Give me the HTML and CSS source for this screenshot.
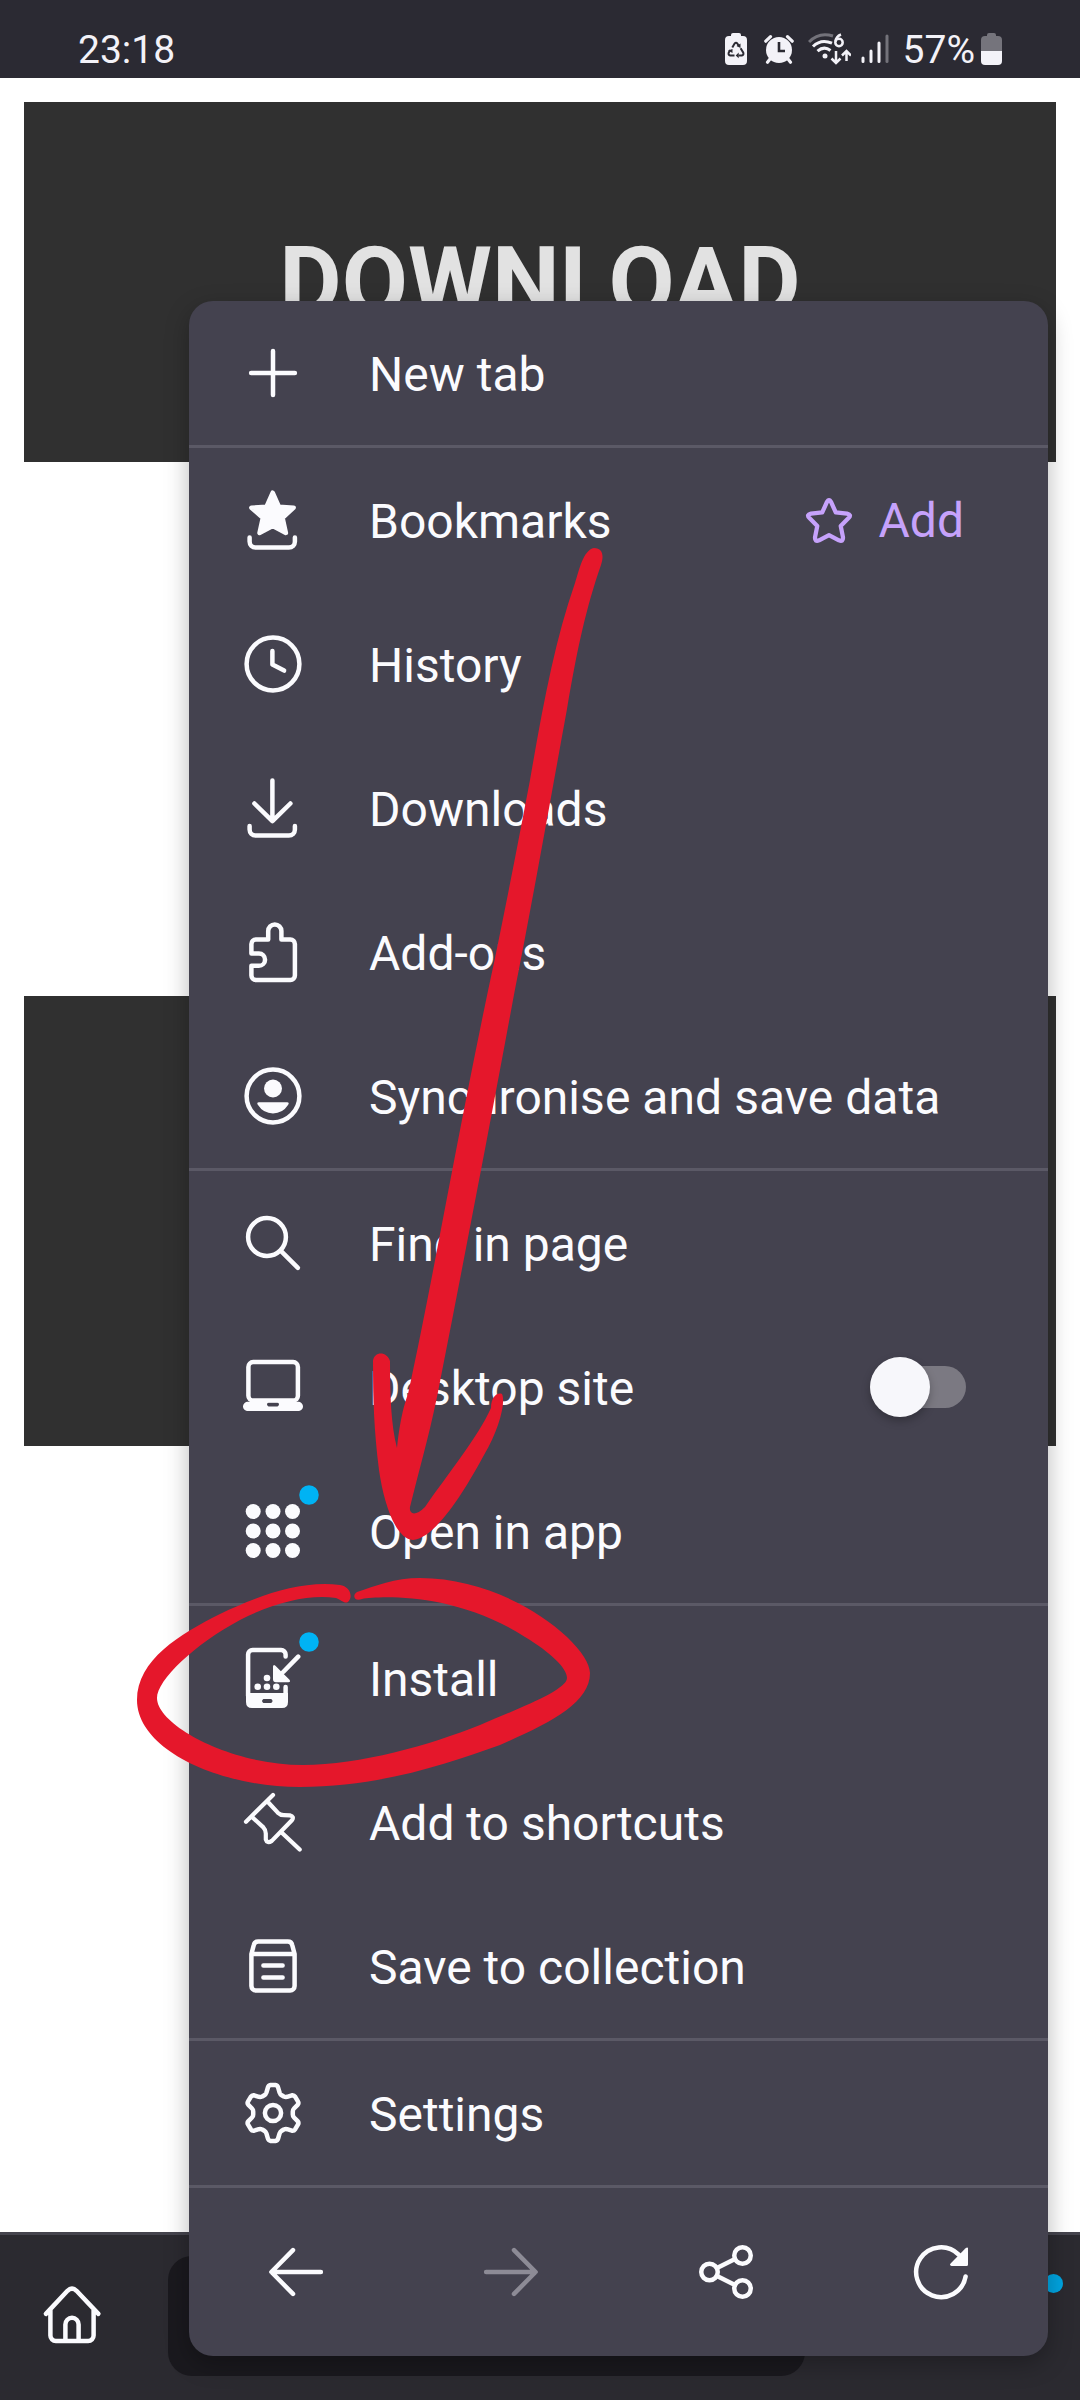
FILE: index.html
```html
<!DOCTYPE html>
<html lang="en">
<head>
<meta charset="utf-8">
<title>Browser menu</title>
<link rel="stylesheet" href="styles.css">
</head>
<body>
<div class="screen">
  <header class="status">
    <span class="clock">23:18</span>
    <div class="status-icons">
      <svg class="s-recycle" viewBox="0 0 22 32"><path fill="#f3f2f8" d="M6 3V2q0-2 2-2h6q2 0 2 2v1h2q4 0 4 4v21q0 4-4 4H4q-4 0-4-4V7q0-4 4-4z"/><g fill="none" stroke="#2b2a33" stroke-width="2"><path d="M7.3 14.6 9.6 10.600q1.400-1.700 2.800 0l1.300 2.300"/><path d="M15.600 15.200l2.700 4.500q.7 2.200-1.500 2.700h-3.300"/><path d="M9.500 22.400H5.200q-2.200-.5-1.500-2.700l1.500-2.600"/></g><path fill="#2b2a33" d="M15.500 10.500v4.500l-4-2zM13.700 19.500v5.800l-3-2.900zM3 17.500l4.500-1.500v4z"/></svg>
      <svg class="s-alarm" viewBox="0 0 30 30"><circle cx="15" cy="16" r="13" fill="#f3f2f8"/><path fill="none" stroke="#f3f2f8" stroke-width="3.200" stroke-linecap="round" d="M1.800 7.200 6.500 2.700M28.200 7.200 23.500 2.700M6 25 3.500 28.200M24 25l2.500 3.200"/><path d="M15 8v9h6" fill="none" stroke="#2b2a33" stroke-width="2.600"/></svg>
      <svg class="s-wifi" viewBox="0 0 43 32"><g fill="none" stroke-width="3"><path stroke="#73727a" d="M1 9Q11-1.500 25 3"/><path stroke="#f3f2f8" d="M5 13.500Q13 5.500 24 10.200M9.500 18.200Q16 12.500 22.500 17.500"/></g><circle cx="17" cy="23" r="2.500" fill="#f3f2f8"/><g fill="none" stroke="#f3f2f8" stroke-width="2.500"><circle cx="31" cy="9.500" r="3.700"/><path d="M27.500 8.500Q28 3.500 33 1.500M28 18v12M23.500 25.500l4.500 4.500 4.500-4.500M38.500 28V18M34 22.500l4.500-4.500 4.500 4.500"/></g></svg>
      <svg class="s-signal" viewBox="0 0 28 30"><g fill="none" stroke="#f3f2f8" stroke-width="3" stroke-linecap="round"><path d="M2 24v3.500M10 17v10.500M18 9v18.500"/><path stroke="#73727a" d="M26 2v25.500"/></g></svg>
      <span class="percent">57%</span>
      <svg class="s-battery" viewBox="0 0 21 32"><path fill="#75747c" d="M6 3V2q0-2 2-2h5q2 0 2 2v1h2q4 0 4 4v11H0V7q0-4 4-4z"/><path fill="#f3f2f8" d="M0 18h21v10q0 4-4 4H4q-4 0-4-4z"/></svg>
    </div>
  </header>
  <main class="page">
    <section class="card card-first"><h1>DOWNLOAD</h1></section>
    <section class="card card-second"></section>
  </main>
  <footer class="toolbar">
    <svg class="icon" viewBox="0 0 24 24"><path d="m3.300 11.300 7.200-7.700q1.500-1.500 3 0l7.300 7.700M4.800 10v8.500a1.800 1.800 0 0 0 1.800 1.800h10.800a1.800 1.800 0 0 0 1.800-1.800V10M9.800 20v-5.200a2.200 2.200 0 0 1 4.400 0V20"/></svg>
    <div class="url"></div>
    <i class="toolbar-dot"></i>
  </footer>

  <nav class="menu">
    <div class="group">
      <div class="row"><svg class="icon" viewBox="0 0 24 24"><path d="M12 4.700v14.600M4.700 12h14.600"/></svg><span>New tab</span></div>
    </div>
    <div class="group">
      <div class="row"><svg class="icon" viewBox="0 0 24 24"><path class="fill" d="m11.900 2.900 2.100 4.700 4.900.3-3.700 3.400 1.100 5-4.400-2.300-4.400 2.300 1.100-5-3.800-3.400 5-.3z"/><path d="M4.200 17.800v1.400a2 2 0 0 0 2 2h11.100a2 2 0 0 0 2-2v-1.400"/></svg><span>Bookmarks</span>
        <span class="add"><svg class="star" viewBox="0 0 24 24"><path d="m11 3.700q1-2 2 0l2 4.500 5 .5q2.200.5.700 2l-3.500 3.500 1 5q.2 2.200-1.800 1.400l-4.400-2.300-4.400 2.300q-2 .8-1.800-1.400l1-5-3.500-3.500q-1.500-1.500.7-2l5-.5z"/></svg>Add</span></div>
      <div class="row"><svg class="icon" viewBox="0 0 24 24"><circle cx="12" cy="12" r="8.800"/><path d="M11.800 7.700v4.500l3.900 2"/></svg><span>History</span></div>
      <div class="row"><svg class="icon" viewBox="0 0 24 24"><path d="M11.800 2.800v13.500M5.800 10.500l6 5.900 6-5.900M4.200 18v1.200a2 2 0 0 0 2 2h11.100a2 2 0 0 0 2-2V18"/></svg><span>Downloads</span></div>
      <div class="row"><svg class="icon" viewBox="0 0 24 24"><path d="M10.400 7.800V5a2.200 2.200 0 0 1 4.400 0v2.800h3a1.500 1.500 0 0 1 1.500 1.500v10.500a1.500 1.500 0 0 1-1.500 1.500H6.300a1.500 1.500 0 0 1-1.500-1.500v-3.200h2.500a2.050 2.050 0 0 0 0-4.100H4.800V9.300a1.500 1.500 0 0 1 1.500-1.500z"/></svg><span>Add-ons</span></div>
      <div class="row sync"><svg class="icon" viewBox="0 0 24 24"><circle cx="12" cy="12" r="8.800"/><circle class="solid" cx="12" cy="9.500" r="3"/><path class="solid" d="M7.300 14.100h9.400q.9.100.3.900-1.800 2.800-5 2.800t-5-2.800q-.6-.8.300-.9z"/></svg><span>Synchronise and save data</span></div>
    </div>
    <div class="group">
      <div class="row"><svg class="icon" viewBox="0 0 24 24"><circle cx="10" cy="10" r="6.300"/><path d="m14.700 14.700 5.600 5.600"/></svg><span>Find in page</span></div>
      <div class="row"><svg class="icon" viewBox="0 0 24 24"><rect x="3.800" y="3.700" width="16.500" height="12.800" rx="1.600"/><path class="solid" fill-rule="evenodd" d="M3.300 16.900h17.400q1.300.5 1.300 1.600t-1.300 1.500H3.300Q2 19.600 2 18.500t1.300-1.600zm7.200.2q-1 .7 0 1.400h3q1-.7 0-1.400z"/></svg><span>Desktop site</span><i class="switch"></i></div>
      <div class="row"><svg class="icon" viewBox="0 0 24 24"><g class="solid"><circle cx="5.400" cy="5.500" r="2.500"/><circle cx="12" cy="5.500" r="2.500"/><circle cx="18.500" cy="5.500" r="2.500"/><circle cx="5.400" cy="12" r="2.500"/><circle cx="12" cy="12" r="2.500"/><circle cx="18.500" cy="12" r="2.500"/><circle cx="5.400" cy="18.500" r="2.500"/><circle cx="12" cy="18.500" r="2.500"/><circle cx="18.500" cy="18.500" r="2.500"/></g><circle class="dot" cx="24" cy="0" r="3.250"/></svg><span>Open in app</span></div>
    </div>
    <div class="group">
      <div class="row"><svg class="icon" viewBox="0 0 24 24"><path d="M3.700 18V4.200a1.500 1.500 0 0 1 1.500-1.500h9.500a1.500 1.500 0 0 1 1.500 1.500v.6M16.200 15v3M20.400 4.900l-5 5.100"/><path class="solid" fill-rule="evenodd" d="M3 17h14v3q0 2-2 2H5q-2 0-2-2zm5.800 2q-.9.650 0 1.300h2.600q.9-.65 0-1.300zM12 8.200q.1-.9.800-.3l4.700 4.700q.5.800-.4.800H13q-1 0-1-1z"/><g class="solid"><circle cx="6.900" cy="14.900" r="1.100"/><circle cx="10" cy="14.900" r="1.100"/><circle cx="13.100" cy="14.900" r="1.100"/><circle cx="10" cy="12" r="1.100"/></g><circle class="dot" cx="24" cy="0" r="3.250"/></svg><span>Install</span></div>
      <div class="row"><svg class="icon pin" viewBox="0 0 24 24"><path d="m12 3-9 8.900M10 5l3.600 3.900q.8.800 2 .8l2 .1q1.600.4.700 1.600l-6.700 6.900q-1.600 1-2-.5v-2q0-1.200-.8-2L5 10.300M14.700 15.300l6.200 5.900"/></svg><span>Add to shortcuts</span></div>
      <div class="row"><svg class="icon" viewBox="0 0 24 24"><path d="M4.800 8v10.700a1.500 1.500 0 0 0 1.500 1.500h11.400a1.500 1.500 0 0 0 1.500-1.500V8l-.8-3a1.500 1.500 0 0 0-1.500-1.200H7.100A1.500 1.500 0 0 0 5.600 5zh14.400M8.800 11.800h6.400M8.800 15.800h6.400"/></svg><span>Save to collection</span></div>
    </div>
    <div class="group">
      <div class="row"><svg class="icon" viewBox="0 0 24 24"><circle cx="12" cy="12" r="2.700"/><path d="M11.200 2.700h1.600q.7.100.9.800l.5 1.700q.2.600.7.900l.7.400q.5.200 1.100.1l1.600-.5q.7-.1 1.100.5l.9 1.500q.4.700-.1 1.200l-1.200 1.200q-.4.400-.4 1v1q0 .6.400 1l1.200 1.200q.5.500.1 1.200l-.9 1.500q-.4.600-1.100.5l-1.600-.5q-.6-.1-1.100.1l-.7.400q-.5.300-.7.900l-.5 1.700q-.2.700-.9.800h-1.600q-.7-.1-.9-.8l-.5-1.700q-.2-.6-.7-.9l-.7-.4q-.5-.2-1.100-.1l-1.600.5q-.7.100-1.100-.5l-.9-1.500q-.4-.7.100-1.200L5 13.500q.4-.4.400-1v-1q0-.6-.4-1L3.800 9.300q-.5-.5-.1-1.200l.9-1.500q.4-.6 1.100-.5l1.600.5q.6.100 1.100-.1l.7-.4q.5-.3.700-.9l.5-1.700q.2-.7.900-.8z"/></svg><span>Settings</span></div>
    </div>
    <div class="actions">
      <div><svg class="icon" viewBox="0 0 24 24"><path d="M20.300 12H3.900M11 4.700 3.800 12l7.200 7.300"/></svg></div>
      <div class="disabled"><svg class="icon" viewBox="0 0 24 24"><path d="M3.700 12h16.400M13 4.700l7.200 7.300-7.200 7.300"/></svg></div>
      <div><svg class="icon" viewBox="0 0 24 24"><circle cx="6.500" cy="12" r="2.750"/><circle cx="17.500" cy="6.500" r="2.750"/><circle cx="17.500" cy="17.500" r="2.750"/><path d="m9 10.700 6-3M9 13.300l6 3"/></svg></div>
      <div><svg class="icon" viewBox="0 0 24 24"><path d="M20.200 13.500A8.300 8.300 0 1 1 17.900 6.200"/><path class="solid" d="M21 4v5.500q0 .5-.5.500h-5q-.8-.2-.3-.8l4.900-5q.7-.7.900-.2z"/></svg></div>
    </div>
  </nav>

  <svg class="marker" viewBox="0 0 1080 2400">
    <path d="M594 548C603 548 604 556 601 565C586 608 577 650 567 709C545 830 530 915 513 1000C490 1125 460 1280 437 1397C428 1440 419 1470 410 1507C409 1514 415 1517 425 1507C445 1478 478 1437 491 1408C491 1396 498 1392 502 1394C506 1402 499 1430 484 1455C465 1490 436 1538 413 1540C396 1539 384 1505 379 1470C374 1430 373 1400 373 1361C374 1351 387 1351 390 1361C390 1395 391 1425 397 1448C400 1420 404 1405 408 1394C433 1280 460 1120 495 958C508 895 520 833 530 780C543 705 555 640 575 583C579 571 583 550 594 548Z"/>
    <path d="M340 1585C300 1580 258 1596 220 1614C180 1634 137 1660 137 1700C137 1750 220 1787 300 1787C380 1787 450 1763 500 1745C550 1723 590 1703 590 1673C590 1645 510 1578 420 1578C395 1578 375 1586 357 1592C352 1595 354 1602 362 1599C380 1596 455 1592 525 1637C550 1652 567 1668 567 1678C567 1690 520 1708 480 1725C430 1745 360 1765 303 1765C230 1765 157 1725 157 1698C157 1680 195 1644 240 1620C275 1602 310 1594 336 1598C342 1600 344 1604 348 1602C354 1596 349 1586 340 1585Z"/>
  </svg>
</div>
</body>
</html>
```
FILE: styles.css
```css
* { box-sizing: border-box; }
body { margin: 0; background: #fff; font-family: Roboto, sans-serif; }
.screen { position: relative; display: flex; flex-direction: column; width: 1080px; height: 2400px; overflow: hidden; }

.status { display: flex; flex: none; justify-content: space-between; align-items: center; height: 78px; padding: 20px 78px 0; background: #2b2a33; color: #f3f2f8; font-size: 39px; line-height: 58px; }
.clock, .percent { padding-top: 2px; }
.status-icons { display: flex; align-items: center; }
.s-recycle { width: 22px; height: 32px; margin-right: 17px; }
.s-alarm { width: 30px; height: 30px; margin-right: 14px; }
.s-wifi { width: 43px; height: 32px; margin-right: 10px; }
.s-signal { width: 28px; height: 30px; margin-right: 14px; }
.s-battery { width: 21px; height: 32px; margin-left: 6px; }

.page { display: flex; flex: 1; flex-direction: column; padding: 24px; }
.card { flex: none; background: #303030; }
.card-first { height: 360px; padding-top: 124px; }
.card-first h1 { margin: 0; color: #e2e2e2; font-size: 96px; font-weight: 700; line-height: 112px; text-align: center; }
.card-second { height: 450px; margin-top: 534px; }

.toolbar { position: relative; display: flex; flex: none; align-items: center; height: 168px; padding: 0 36px 4px; border-top: 3px solid #45444d; background: #2b2a30; }
.url { width: 637px; height: 120px; margin-left: 60px; border-radius: 24px; background: #1a191e; }
.toolbar-dot { position: absolute; top: 39px; left: 1044px; width: 19px; height: 19px; border-radius: 50%; background: #00a4e0; }

.icon { flex: none; width: 72px; height: 72px; overflow: visible; fill: none; stroke: #fbfbfe; stroke-width: 1.5; stroke-linecap: round; stroke-linejoin: round; }
.icon .fill { fill: #fbfbfe; }
.icon .solid { fill: #fbfbfe; stroke: none; }
.icon .dot { fill: #00b3f4; stroke: none; }
.icon.pin { stroke-width: 1.4; }

.menu { position: absolute; top: 301px; left: 189px; width: 859px; height: 2055px; border-radius: 24px; background: #44424f; color: #fbfbfe; box-shadow: 0 8px 24px rgba(0, 0, 0, .28); }
.group { border-bottom: 3px solid #5b5966; }
.row { display: flex; align-items: center; height: 144px; padding: 0 82px 0 48px; font-size: 48px; line-height: 60px; white-space: nowrap; }
.row > span:not(.add) { margin-left: 60px; padding-top: 4px; }
.sync > span { letter-spacing: .05px; }
.add { display: flex; align-items: center; margin: 2px 2px 0 auto; color: #c6a2fb; }
.star { width: 54px; height: 54px; margin-right: 23px; fill: none; stroke: currentColor; stroke-width: 1.9; stroke-linejoin: round; }
.switch { display: flex; align-items: center; width: 96px; height: 42px; margin-left: auto; border-radius: 21px; background: #7b7982; }
.switch::before { content: ""; flex: none; width: 60px; height: 60px; margin: -9px 0; border-radius: 50%; background: #f7f7fb; box-shadow: 0 4px 8px rgba(0, 0, 0, .25); }
.actions { display: flex; height: 168px; }
.actions div { display: flex; flex: 1; align-items: center; justify-content: center; }
.disabled .icon { stroke: #8d8b96; }

.marker { position: absolute; inset: 0; width: 1080px; height: 2400px; fill: #e5172b; pointer-events: none; }
```
